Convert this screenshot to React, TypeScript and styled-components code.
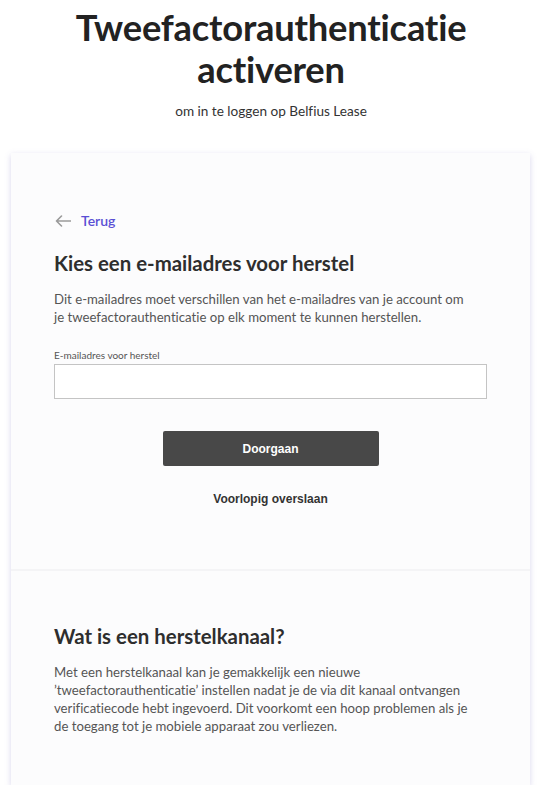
import React from "react";
import styled, { createGlobalStyle } from "styled-components";

const GlobalStyle = createGlobalStyle`
  html, body {
    margin: 0;
    padding: 0;
    background: #ffffff;
  }
  body {
    font-family: "Lato", "Noto Sans", sans-serif;
    font-variant-ligatures: none;
    color: #333333;
  }
`;

const Page = styled.div`
  width: 542px;
  padding-top: 6px;
`;

const Header = styled.header`
  text-align: center;
`;

const Title = styled.h1`
  margin: 0;
  font-size: 36.3px;
  line-height: 42px;
  font-weight: 700;
  color: #222222;
  letter-spacing: -0.2px;
`;

const Subtitle = styled.p`
  margin: 12px 0 0;
  font-size: 13.6px;
  line-height: 18px;
  color: #333333;
`;

const Card = styled.main`
  width: 519px;
  margin: 33px 0 0 11px;
  background: #fcfcfd;
  box-shadow: 0 2px 6px rgba(120, 110, 190, 0.28);
`;

const Section = styled.section<{ $top: number; $bottom: number }>`
  padding: ${(p) => p.$top}px 43px ${(p) => p.$bottom}px;
  & + & {
    border-top: 2px solid #f4f4f6;
  }
`;

const BackLink = styled.a`
  display: inline-flex;
  align-items: center;
  gap: 10px;
  margin-left: 1px;
  color: #5a4fd4;
  font-size: 14px;
  font-weight: 600;
  line-height: 18px;
  text-decoration: none;
  cursor: pointer;
`;

const Heading = styled.h2<{ $gap: number }>`
  margin: ${(p) => p.$gap}px 0 0;
  font-size: 20.4px;
  line-height: 26px;
  font-weight: 700;
  color: #2e2e2e;
`;

const Text = styled.p<{ $gap: number }>`
  max-width: 418px;
  margin: ${(p) => p.$gap}px 0 0;
  font-size: 13.2px;
  line-height: 18px;
  color: #555555;
`;

const Field = styled.label`
  display: flex;
  flex-direction: column;
  gap: 3px;
  margin-top: 23px;
  font-size: 10px;
  line-height: 12px;
  color: #555555;
`;

const Input = styled.input`
  box-sizing: border-box;
  width: 100%;
  height: 35px;
  border: 1px solid #c4c4c4;
  background: #ffffff;
  font: inherit;
  font-size: 14px;
  padding: 0 10px;
  outline: none;
`;

const Actions = styled.div`
  display: flex;
  flex-direction: column;
  align-items: center;
  gap: 25px;
  margin-top: 32px;
`;

const PrimaryButton = styled.button`
  width: 216px;
  height: 35px;
  border: none;
  border-radius: 2px;
  background: #484848;
  color: #ffffff;
  font-family: "Liberation Sans", Arial, sans-serif;
  font-size: 12px;
  font-weight: 700;
  cursor: pointer;
`;

const TextButton = styled.button`
  border: none;
  background: none;
  padding: 0;
  color: #333333;
  font-family: "Liberation Sans", Arial, sans-serif;
  font-size: 12px;
  font-weight: 700;
  line-height: 16px;
  cursor: pointer;
`;

const ArrowLeft = () => (
  <svg width="16" height="12" viewBox="0 0 16 12" fill="none">
    <path
      d="M15.5 6H1.5M6.5 1L1.5 6l5 5"
      stroke="#9a9a9a"
      strokeWidth="1.6"
      strokeLinecap="round"
      strokeLinejoin="round"
    />
  </svg>
);

export default function App() {
  return (
    <Page>
      <GlobalStyle />
      <Header>
        <Title>
          Tweefactorauthenticatie
          <br />
          activeren
        </Title>
        <Subtitle>om in te loggen op Belfius Lease</Subtitle>
      </Header>
      <Card>
        <Section $top={58} $bottom={62}>
          <BackLink>
            <ArrowLeft />
            Terug
          </BackLink>
          <Heading $gap={20}>Kies een e-mailadres voor herstel</Heading>
          <Text $gap={14}>
            Dit e-mailadres moet verschillen van het e-mailadres van je account om
            je tweefactorauthenticatie op elk moment te kunnen herstellen.
          </Text>
          <Field>
            E-mailadres voor herstel
            <Input type="email" />
          </Field>
          <Actions>
            <PrimaryButton>Doorgaan</PrimaryButton>
            <TextButton>Voorlopig overslaan</TextButton>
          </Actions>
        </Section>
        <Section $top={52} $bottom={50}>
          <Heading $gap={0}>Wat is een herstelkanaal?</Heading>
          <Text $gap={14}>
            Met een herstelkanaal kan je gemakkelijk een nieuwe
            <br />
            ’tweefactorauthenticatie’ instellen nadat je de via dit kanaal ontvangen
            verificatiecode hebt ingevoerd. Dit voorkomt een hoop problemen als je
            de toegang tot je mobiele apparaat zou verliezen.
          </Text>
        </Section>
      </Card>
    </Page>
  );
}
